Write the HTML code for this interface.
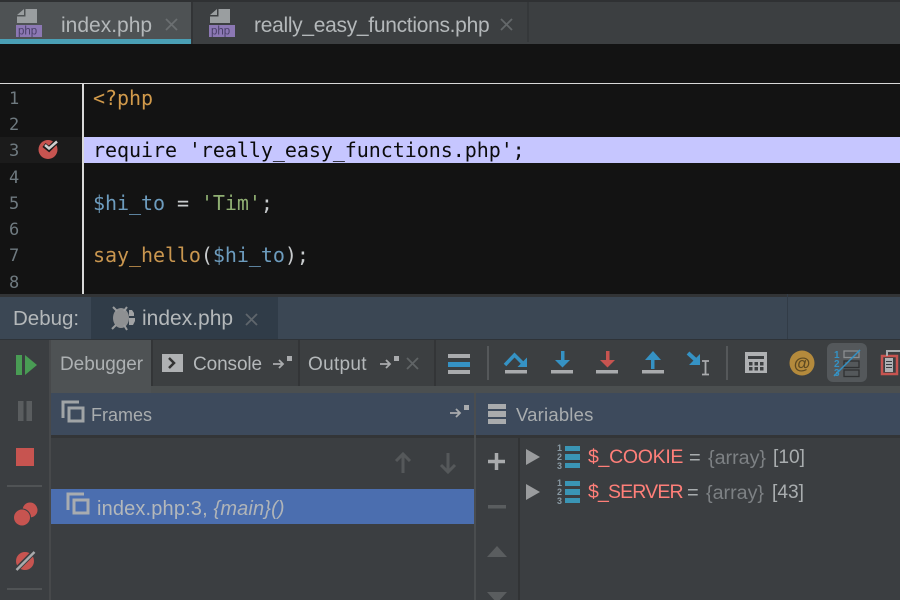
<!DOCTYPE html>
<html><head><meta charset="utf-8"><style>
html,body{margin:0;padding:0;width:900px;height:600px;overflow:hidden;background:#3b3e41}
.a{position:absolute}
.t{position:absolute;white-space:pre;font-family:"Liberation Sans",sans-serif;color:#b0b4b6;font-size:20px;line-height:24px}
.c{position:absolute;white-space:pre;font-family:"DejaVu Sans Mono",monospace;font-size:20px;letter-spacing:-.05px;line-height:26px;left:93px}
.n{position:absolute;left:9px;width:12px;font-family:"DejaVu Sans Mono",monospace;font-size:17px;color:#6f7a80;line-height:26px}
svg{position:absolute;left:0;top:0}
</style></head><body>
<!-- top -->
<div class="a" style="left:0;top:0;width:900px;height:44px;background:#3c3f41"></div>
<div class="a" style="left:0;top:0;width:900px;height:2px;background:#2f3133"></div>
<div class="a" style="left:0;top:2px;width:191px;height:37px;background:#4e5254"></div>
<div class="a" style="left:0;top:39px;width:191px;height:5px;background:#4a9fb5"></div>
<div class="a" style="left:191px;top:2px;width:2px;height:42px;background:#323436"></div>
<div class="a" style="left:527px;top:2px;width:2px;height:40px;background:#35383a"></div>
<div class="t" style="left:61px;top:14px;font-size:21px;color:#b4b8ba">index.php</div>
<div class="t" style="left:254px;top:14px;font-size:21px;color:#b4b8ba;letter-spacing:-.3px">really_easy_functions.php</div>
<!-- editor -->
<div class="a" style="left:0;top:44px;width:900px;height:250px;background:#131313"></div>
<div class="a" style="left:0;top:83px;width:900px;height:1px;background:#d8d8d8"></div>
<div class="a" style="left:82px;top:84px;width:2px;height:210px;background:#d8d8d8"></div>
<div class="a" style="left:0;top:137px;width:82px;height:26px;background:#1b1b1b"></div>
<div class="a" style="left:84px;top:137px;width:816px;height:26px;background:#c6c6ff"></div>
<div class="n" style="top:86px">1</div><div class="n" style="top:112px">2</div><div class="n" style="top:138px">3</div><div class="n" style="top:165px">4</div><div class="n" style="top:191px">5</div><div class="n" style="top:217px">6</div><div class="n" style="top:243px">7</div><div class="n" style="top:270px">8</div>
<div class="c" style="top:85px;color:#d19a4b">&lt;?php</div>
<div class="c" style="top:137px;color:#0c0c0c">require 'really_easy_functions.php';</div>
<div class="c" style="top:190px;color:#c9ccce"><span style="color:#6d9cbe">$hi_to</span> = <span style="color:#8fae72">'Tim'</span>;</div>
<div class="c" style="top:242px;color:#c9ccce"><span style="color:#c9964f">say_hello</span>(<span style="color:#6d9cbe">$hi_to</span>);</div>
<!-- debug header -->
<div class="a" style="left:0;top:294px;width:900px;height:3px;background:#323436"></div>
<div class="a" style="left:0;top:297px;width:900px;height:42px;background:#3b4754"></div>
<div class="a" style="left:91px;top:297px;width:187px;height:42px;background:#303c48"></div>
<div class="a" style="left:787px;top:294px;width:1px;height:45px;background:#323c47"></div>
<div class="a" style="left:0;top:339px;width:900px;height:1px;background:#2e3338"></div>
<div class="t" style="left:13px;top:307px;font-size:20.5px;color:#b4b8ba">Debug:</div>
<div class="t" style="left:142px;top:307px;font-size:21px;color:#b4b8ba">index.php</div>
<!-- toolbar -->
<div class="a" style="left:0;top:340px;width:49px;height:260px;background:#3b3e41"></div>
<div class="a" style="left:49px;top:340px;width:2px;height:260px;background:#47494b"></div>
<div class="a" style="left:51px;top:340px;width:849px;height:47px;background:#3c3f41"></div>
<div class="a" style="left:51px;top:340px;width:100px;height:53px;background:#4e5254"></div>
<div class="a" style="left:151px;top:340px;width:147px;height:47px;background:#3c3f41"></div>
<div class="a" style="left:151px;top:340px;width:2px;height:47px;background:#333537"></div>
<div class="a" style="left:298px;top:340px;width:2px;height:47px;background:#333537"></div>
<div class="a" style="left:434px;top:340px;width:2px;height:47px;background:#333537"></div>
<div class="a" style="left:151px;top:386px;width:749px;height:7px;background:#4b4f50"></div>
<div class="t" style="left:60px;top:353px;font-size:19px;color:#adb1b3;letter-spacing:-.05px">Debugger</div>
<div class="t" style="left:193px;top:353px;font-size:19px;color:#b4b8ba;letter-spacing:-.1px">Console</div>
<div class="t" style="left:308px;top:353px;font-size:19px;color:#b4b8ba;letter-spacing:.3px">Output</div>
<div class="a" style="left:487px;top:346px;width:2px;height:34px;background:#55585a"></div>
<div class="a" style="left:726px;top:346px;width:2px;height:34px;background:#55585a"></div>
<div class="a" style="left:827px;top:343px;width:40px;height:39px;border-radius:6px;background:#54585b"></div>
<!-- panels -->
<div class="a" style="left:51px;top:393px;width:849px;height:42px;background:#3d4a5c"></div>
<div class="a" style="left:51px;top:435px;width:849px;height:3px;background:#333537"></div>
<div class="a" style="left:474px;top:393px;width:2px;height:207px;background:#4a4d4f"></div>
<div class="a" style="left:518px;top:438px;width:2px;height:162px;background:#313335"></div>
<div class="t" style="left:91px;top:403px;font-size:18px;color:#a9adaf">Frames</div>
<div class="t" style="left:516px;top:403px;font-size:18.5px;color:#a9adaf;letter-spacing:.2px">Variables</div>
<div class="a" style="left:51px;top:489px;width:423px;height:35px;background:#4b6eaf"></div>
<div class="t" style="left:97px;top:497px;font-size:20px;color:#b4b8ba;letter-spacing:.15px">index.php:3, <i style="color:#b0b4b8">{main}()</i></div>
<div class="t" style="left:588px;top:445px;font-size:19.5px;color:#ff7f79;letter-spacing:-.3px">$_COOKIE</div>
<div class="t" style="left:689px;top:446px;font-size:20px;color:#a9adaf">=</div>
<div class="t" style="left:708px;top:446px;font-size:19.7px;color:#7d8184">{array}</div>
<div class="t" style="left:773px;top:446px;font-size:19.2px;color:#a9adaf">[10]</div>
<div class="t" style="left:588px;top:480px;font-size:19.5px;color:#ff7f79;letter-spacing:-.85px">$_SERVER</div>
<div class="t" style="left:687px;top:481px;font-size:20px;color:#a9adaf">=</div>
<div class="t" style="left:706px;top:481px;font-size:19.7px;color:#7d8184">{array}</div>
<div class="t" style="left:772px;top:481px;font-size:19.2px;color:#a9adaf">[43]</div>
<!-- icons -->
<svg width="900" height="600" viewBox="0 0 900 600">
<!-- php file icons -->
<path d="M17 15L24 9V15zM25.500 9H37V23H17V16.500H25.500z" fill="#9a9ea0"/><rect x="16" y="25" width="26" height="12" fill="#8c78b4"/><text x="18" y="34.500" font-family="Liberation Sans,sans-serif" font-size="11.500" fill="#4a4068">php</text>
<path d="M210 15L217 9V15zM218.500 9H230V23H210V16.500H218.500z" fill="#9a9ea0"/><rect x="209" y="25" width="26" height="12" fill="#8c78b4"/><text x="211" y="34.500" font-family="Liberation Sans,sans-serif" font-size="11.500" fill="#4a4068">php</text>
<!-- close -->
<g stroke-width="1.800" fill="none">
<path d="M166 19l11 11M177 19l-11 11" stroke="#6b6f71"/>
<path d="M501 19l11 11M512 19l-11 11" stroke="#64686a"/>
<path d="M246 314l11 11M257 314l-11 11" stroke="#5f666c"/>
<path d="M407 358l11 11M418 358l-11 11" stroke="#606466"/>
</g>
<!-- breakpoint -->
<circle cx="48" cy="149.500" r="9.500" fill="#c75450"/>
<path d="M44 145l5 4 8-8" fill="none" stroke="#1b1b1b" stroke-width="5"/>
<path d="M45 145l4 3.500 8-7" fill="none" stroke="#d0d0d0" stroke-width="2.500"/>
<!-- bug -->
<ellipse cx="121" cy="318" rx="8" ry="10" fill="#8e9092"/>
<path d="M113 307l4 4M127 307l-3 4M112 329l4-4M127 330l-3-5" stroke="#9a9c9e" stroke-width="2" fill="none"/>
<path d="M129 310h3l2 3v3h-5zM129 318h6v3l-2 4h-4z" fill="#a0a2a4"/>
<!-- left toolbar -->
<rect x="16" y="355" width="6" height="20" fill="#499c54"/><path d="M25 355l12 10-12 10z" fill="#499c54"/>
<rect x="18" y="401" width="5.500" height="20" fill="#5a5d5f"/><rect x="26.500" y="401" width="5.500" height="20" fill="#5a5d5f"/>
<rect x="16" y="448" width="18" height="18" fill="#c75450"/>
<rect x="7" y="485" width="35" height="2" fill="#505355"/><rect x="7" y="588" width="35" height="2" fill="#505355"/>
<circle cx="30" cy="510" r="7.500" fill="#c75450"/><circle cx="22" cy="517.500" r="9" fill="#3b3e41"/><circle cx="22" cy="517.500" r="8" fill="#c75450"/>
<circle cx="25" cy="561" r="9" fill="#c75450"/><path d="M35 551l-19 19" stroke="#3b3e41" stroke-width="5"/><path d="M34.500 552l-18 18" stroke="#a9abad" stroke-width="2.500"/>
<!-- console -->
<rect x="162" y="354" width="21" height="18" fill="#afb1b3"/><path d="M169 358l5 5-5 5" fill="none" stroke="#333" stroke-width="2.500"/>
<!-- pin icons -->
<g fill="#a9abad">
<path d="M273 364h10M279 360l4 4-4 4" fill="none" stroke="#a9abad" stroke-width="1.800"/><rect x="287" y="356" width="5" height="5"/>
<path d="M380 364h10M386 360l4 4-4 4" fill="none" stroke="#a9abad" stroke-width="1.800"/><rect x="394" y="356" width="5" height="5"/>
<path d="M450 413h10M456 409l4 4-4 4" fill="none" stroke="#a9abad" stroke-width="1.800"/><rect x="464" y="405" width="5" height="5"/>
</g>
<!-- frames icon -->
<g fill="none" stroke="#a0a4a6" stroke-width="3"><path d="M63 418v-16h16"/><rect x="69" y="408" width="14" height="13"/></g>
<g fill="none" stroke="#a8acb0" stroke-width="3"><path d="M68 510v-16h16"/><rect x="74" y="500" width="14" height="13"/></g>
<!-- variables icon -->
<g fill="#a9abad"><rect x="488" y="404" width="18" height="5"/><rect x="488" y="411" width="18" height="6"/><rect x="488" y="419" width="18" height="5"/></g>
<!-- toolbar icons -->
<g fill="#a9abad"><rect x="448" y="354" width="22" height="4"/><rect x="448" y="370" width="22" height="4"/></g><rect x="448" y="362" width="22" height="5" fill="#3592c4"/>
<path d="M505 365l9.500-10 9 9" fill="none" stroke="#3592c4" stroke-width="3.500"/><path d="M527 357.500v9.500h-9.500z" fill="#3592c4"/><rect x="505" y="370" width="22" height="3.500" fill="#a9abad"/>
<rect x="561" y="351" width="3.500" height="11" fill="#3592c4"/><path d="M555 360h15l-7.500 7.500z" fill="#3592c4"/><rect x="551" y="370" width="22" height="3.500" fill="#a9abad"/>
<rect x="606" y="351" width="3.500" height="11" fill="#c75450"/><path d="M600 360h15l-7.500 7.500z" fill="#c75450"/><rect x="596" y="370" width="22" height="3.500" fill="#a9abad"/>
<rect x="651" y="358" width="3.500" height="11" fill="#3592c4"/><path d="M645 360h16l-8-9z" fill="#3592c4"/><rect x="642" y="370" width="22" height="3.500" fill="#a9abad"/>
<path d="M688 353l11 10" stroke="#3592c4" stroke-width="4"/><path d="M689 365l11-11v11z" fill="#3592c4"/>
<path d="M702 361h7M705.500 361v13M702 374.500h7" fill="none" stroke="#a9abad" stroke-width="1.800"/>
<rect x="745" y="352" width="22" height="21" fill="#afb1b3"/><rect x="748" y="356" width="16" height="3" fill="#3c3f41"/>
<g fill="#3c3f41"><rect x="749" y="362" width="3.500" height="3.500"/><rect x="754.500" y="362" width="3.500" height="3.500"/><rect x="760" y="362" width="3.500" height="3.500"/><rect x="749" y="367" width="3.500" height="3.500"/><rect x="754.500" y="367" width="3.500" height="3.500"/><rect x="760" y="367" width="3.500" height="3.500"/></g>
<circle cx="802" cy="363" r="12.500" fill="#b48a3c"/><text x="802" y="369" text-anchor="middle" font-family="Liberation Sans,sans-serif" font-size="17" font-weight="bold" fill="#5e4a22">@</text>
<!-- sorted icon -->
<g fill="none" stroke="#8a8e90" stroke-width="1.300"><rect x="844" y="351" width="15" height="6.500"/></g>
<g fill="none" stroke="#2f3133" stroke-width="1.300"><rect x="844" y="361" width="15" height="6.500"/><rect x="844" y="370" width="15" height="6.500"/></g>
<g fill="#3592c4" font-family="Liberation Sans,sans-serif" font-size="10" font-weight="bold"><text x="834" y="358">1</text><text x="834" y="367">2</text><text x="834" y="376">3</text></g>
<path d="M834 376l26-26" stroke="#3592c4" stroke-width="1.500"/>
<!-- clipboard -->
<rect x="882" y="356" width="15" height="18" fill="none" stroke="#c75450" stroke-width="2.500"/>
<rect x="885" y="358" width="8" height="14" fill="#b0b2b4"/>
<g fill="#3c3f41"><rect x="886" y="361" width="6" height="1"/><rect x="886" y="364" width="6" height="1"/><rect x="886" y="367" width="6" height="1"/></g>
<path d="M887 356v-5h13" fill="none" stroke="#a9abad" stroke-width="2"/>
<!-- frames arrows -->
<path d="M403 473v-19M396 461l7-7 7 7" fill="none" stroke="#55585a" stroke-width="3"/>
<path d="M448 453v19M441 465l7 7 7-7" fill="none" stroke="#55585a" stroke-width="3"/>
<!-- vars controls -->
<path d="M496.500 453v17M488 461.500h17" stroke="#a9abad" stroke-width="3.500"/>
<rect x="488" y="505" width="18" height="3.500" fill="#5a5d5f"/>
<path d="M487 557l10-11 10 11z" fill="#5a5d5f"/><path d="M487 592l10 11 10-11z" fill="#5a5d5f"/>
<!-- tree -->
<path d="M526 449l14 8-14 8z" fill="#9a9c9e"/><path d="M526 484l14 8-14 8z" fill="#9a9c9e"/>
<g fill="#8a9aa4" font-family="Liberation Sans,sans-serif" font-size="9" font-weight="bold"><text x="557" y="451">1</text><text x="557" y="460">2</text><text x="557" y="469">3</text><text x="557" y="486">1</text><text x="557" y="495">2</text><text x="557" y="504">3</text></g>
<g fill="#3a95b5"><rect x="565" y="446" width="15" height="5"/><rect x="565" y="454" width="15" height="6"/><rect x="565" y="463" width="15" height="5"/><rect x="565" y="481" width="15" height="5"/><rect x="565" y="489" width="15" height="6"/><rect x="565" y="498" width="15" height="5"/></g>
</svg>
</body></html>
